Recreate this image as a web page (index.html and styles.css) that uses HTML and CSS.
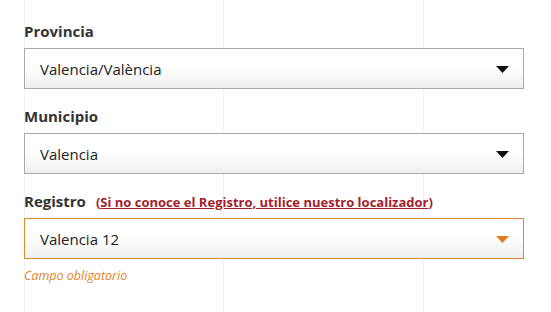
FILE: index.html
```html
<!DOCTYPE html>
<html lang="es">
<head>
<meta charset="utf-8">
<title>Registro</title>
<link rel="stylesheet" href="styles.css">
</head>
<body>
<form class="form">
  <div class="field">
    <div class="label-row"><span class="label">Provincia</span></div>
    <div class="select">
      <span class="value">Valencia/València</span>
      <svg class="arrow" width="13" height="7" viewBox="0 0 13 7"><polygon points="0,0 13,0 6.5,7"/></svg>
    </div>
  </div>
  <div class="field">
    <div class="label-row"><span class="label">Municipio</span></div>
    <div class="select">
      <span class="value">Valencia</span>
      <svg class="arrow" width="13" height="7" viewBox="0 0 13 7"><polygon points="0,0 13,0 6.5,7"/></svg>
    </div>
  </div>
  <div class="field">
    <div class="label-row"><span class="label">Registro</span><span class="hint">(<a href="#">Si no conoce el Registro, utilice nuestro localizador</a>)</span></div>
    <div class="select select-error">
      <span class="value">Valencia 12</span>
      <svg class="arrow" width="13" height="7" viewBox="0 0 13 7"><polygon points="0,0 13,0 6.5,7"/></svg>
    </div>
    <div class="error">Campo obligatorio</div>
  </div>
</form>
</body>
</html>
```
FILE: styles.css
```css
html, body {
  margin: 0;
  padding: 0;
}
body {
  width: 551px;
  height: 312px;
  overflow: hidden;
  background-color: #fff;
  background-image:
    linear-gradient(#f1f1f1, #f1f1f1),
    linear-gradient(#f1f1f1, #f1f1f1),
    linear-gradient(#f1f1f1, #f1f1f1);
  background-size: 1px 100%, 1px 100%, 1px 100%;
  background-position: 24px 0, 223px 0, 423px 0;
  background-repeat: no-repeat;
  font-family: "Open Sans", "Noto Sans", sans-serif;
  color: #222;
}
.form {
  padding: 21px 0 0 24px;
  width: 500px;
}
.field {
  margin-bottom: 17px;
}
.label-row {
  display: flex;
  align-items: baseline;
  gap: 10px;
  height: 20px;
  line-height: 20px;
  margin-bottom: 7px;
}
.label {
  font-size: 15px;
  font-weight: 700;
  color: #333;
}
.hint {
  font-size: 13px;
  font-weight: 700;
  color: #a51d2d;
}
.hint a {
  color: #a51d2d;
  text-decoration: underline;
}
.select {
  box-sizing: border-box;
  height: 41px;
  border: 1px solid #aaa;
  background: linear-gradient(#fff 45%, #efefef);
  display: flex;
  align-items: center;
  justify-content: space-between;
  padding: 0 14px 0 15px;
}
.value {
  font-size: 15px;
  color: #222;
}
.arrow {
  fill: #111;
  margin-top: 1px;
}
.select-error {
  border-color: #dc8a32;
}
.select-error .arrow {
  fill: #e57d1c;
}
.error {
  margin-top: 8px;
  font-size: 12.5px;
  font-style: italic;
  color: #e08424;
  line-height: 18px;
}
```
